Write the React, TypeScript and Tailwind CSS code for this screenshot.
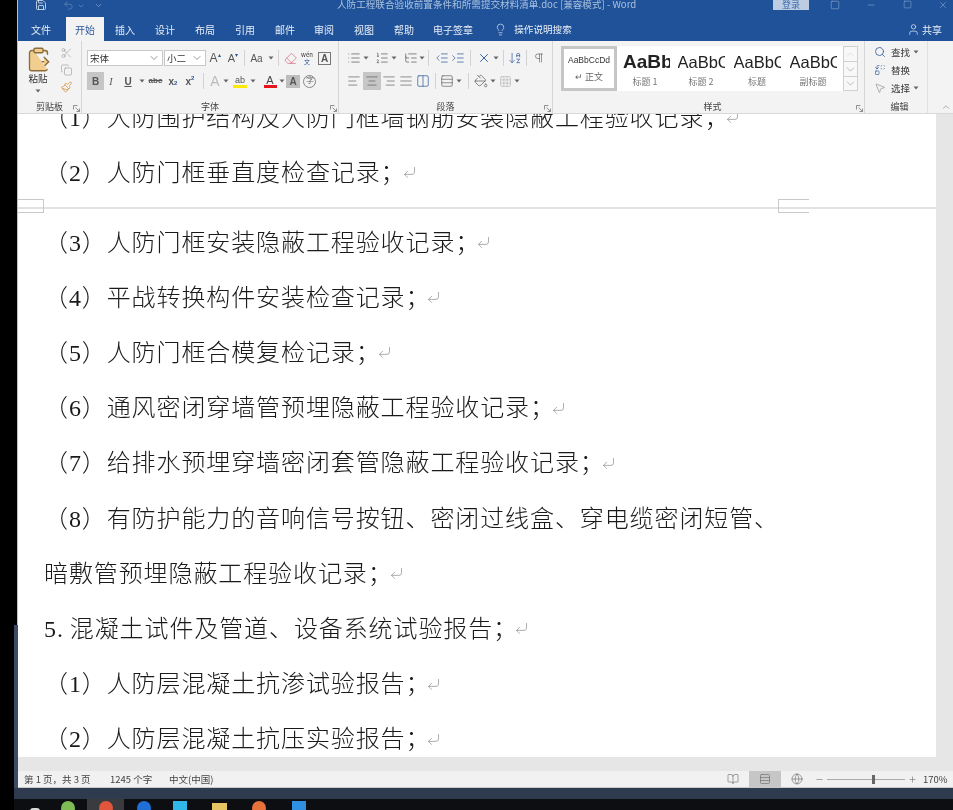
import type { ReactNode } from "react";
import {
  AlignCenter,
  AlignJustify,
  AlignLeft,
  AlignRight,
  ArrowDownAZ,
  BookOpen,
  ChevronDown,
  ChevronUp,
  ClipboardPaste,
  Columns2,
  Copy,
  CornerDownLeft,
  Eraser,
  Globe,
  Grid3x3,
  IndentDecrease,
  IndentIncrease,
  Lightbulb,
  List,
  ListOrdered,
  ListTree,
  Minus,
  MousePointer2,
  PaintBucket,
  Paintbrush,
  Pilcrow,
  Plus,
  Replace,
  Rows3,
  Save,
  Scissors,
  Search,
  Square,
  Undo2,
  User,
  X,
} from "lucide-react";

const page1 = ["（1）人防围护结构及人防门框墙钢筋安装隐蔽工程验收记录；", "（2）人防门框垂直度检查记录；"];
const page2 = [
  "（3）人防门框安装隐蔽工程验收记录；",
  "（4）平战转换构件安装检查记录；",
  "（5）人防门框合模复检记录；",
  "（6）通风密闭穿墙管预埋隐蔽工程验收记录；",
  "（7）给排水预埋穿墙密闭套管隐蔽工程验收记录；",
];

function Caret() {
  return (
    <svg width="6" height="4" viewBox="0 0 6 4" className="mx-auto">
      <path d="M0.5 0.5h5L3 3.5z" fill="#666" />
    </svg>
  );
}

function CaretSlot({ className = "w-[8px]" }: { className?: string }) {
  return (
    <div className={`${className} flex shrink-0 items-center justify-center`}>
      <Caret />
    </div>
  );
}

function Slot({ className, children }: { className: string; children: ReactNode }) {
  return <div className={`${className} flex h-full shrink-0 items-center justify-center text-[#555]`}>{children}</div>;
}

function Sep({ className }: { className: string }) {
  return <div className={`${className} h-[16px] w-px shrink-0 self-center bg-[#d2d2d2]`} />;
}

function Launcher() {
  return (
    <svg width="7" height="7" viewBox="0 0 7 7" className="absolute right-[1px] bottom-[1px]">
      <path d="M0.5 0.5h4M0.5 0.5v4M2.5 2.5l4 4M6.5 3.5v3h-3" fill="none" stroke="#777" strokeWidth="0.8" />
    </svg>
  );
}

function GroupLabel({ children, launcher = true }: { children: ReactNode; launcher?: boolean }) {
  return (
    <div className="relative mt-auto flex h-[13px] items-center justify-center text-[9px] leading-none text-[#444]">
      {children}
      {launcher && <Launcher />}
    </div>
  );
}

function Ret() {
  return <CornerDownLeft size={15} strokeWidth={1.3} className="ml-[-4px] inline-block shrink-0 text-[#9a9a9a]" />;
}

function DocLine({ text, mark = true }: { text: ReactNode; mark?: boolean }) {
  return (
    <div className="flex h-[55.2px] items-center whitespace-nowrap pl-[26px] text-[24px] font-light tracking-[0.9px] text-[#1a1a1a]">
      <span>{text}</span>
      {mark && <Ret />}
    </div>
  );
}

function StyleItem({ sample, name, className }: { sample: string; name: string; className: string }) {
  return (
    <div className="flex h-full w-[56px] shrink-0 flex-col items-center overflow-hidden">
      <div className={`${className} mt-[5px] flex h-[23px] w-[47px] items-center overflow-hidden font-['Liberation_Sans',sans-serif] whitespace-nowrap text-[#222]`}>
        {sample}
      </div>
      <div className="mt-[3px] text-[9px] leading-none text-[#777]">{name}</div>
    </div>
  );
}

function EditRow({ icon, label, caret }: { icon: ReactNode; label: string; caret?: boolean }) {
  return (
    <div className="flex h-[18px] items-center text-[9.5px] text-[#333]">
      <div className="flex w-[16px] items-center justify-center">{icon}</div>
      <span className="ml-[3px]">{label}</span>
      {caret && <div className="ml-[3px]"><Caret /></div>}
    </div>
  );
}

function Ribbon() {
  return (
    <div className="flex h-[73px] shrink-0 border-b border-[#d8d8d8] bg-[#f3f3f3]">
      {/* 剪贴板 */}
      <div className="flex w-[64px] shrink-0 flex-col border-r border-[#d6d6d6]">
        <div className="flex h-[52px] pt-[5px]">
          <div className="flex w-[40px] flex-col items-center">
            <ClipboardPaste size={27} strokeWidth={1.2} className="fill-[#f1cd8f] text-[#8a6d3b]" />
            <div className="mt-[1px] text-[9.5px] leading-none text-[#333]">粘贴</div>
            <div className="mt-[5px]"><Caret /></div>
          </div>
          <div className="flex w-[16px] flex-col items-center gap-[5px] pt-[1px] text-[#999]">
            <Scissors size={13} strokeWidth={1.2} />
            <Copy size={13} strokeWidth={1.2} />
            <Paintbrush size={13} strokeWidth={1.4} className="text-[#c98b2e]" />
          </div>
        </div>
        <GroupLabel>剪贴板</GroupLabel>
      </div>

      {/* 字体 */}
      <div className="flex w-[257px] shrink-0 flex-col border-r border-[#d6d6d6]">
        <div className="mt-[9px] flex h-[16px] items-center pl-[5px] text-[#555]">
          <div className="flex h-full w-[76px] shrink-0 items-center justify-between border border-[#c8c8c8] bg-white px-[2px] text-[9.5px] text-[#333]">
            宋体
            <ChevronDown size={12} strokeWidth={1} />
          </div>
          <div className="ml-px flex h-full w-[42px] shrink-0 items-center justify-between border border-[#c8c8c8] bg-white px-[2px] text-[9.5px] text-[#333]">
            小二
            <ChevronDown size={12} strokeWidth={1} />
          </div>
          <Slot className="w-[18px] font-['Liberation_Sans',sans-serif] text-[12px]">A<span className="mb-[6px] text-[6px] text-[#2b579a]">▴</span></Slot>
          <Slot className="w-[18px] font-['Liberation_Sans',sans-serif] text-[11px]">A<span className="mb-[6px] text-[6px] text-[#2b579a]">▾</span></Slot>
          <Sep className="ml-[2px]" />
          <Slot className="ml-[1px] w-[21px] font-['Liberation_Sans',sans-serif] text-[10px]">Aa</Slot>
          <CaretSlot className="w-[7px]" />
          <Sep className="ml-[4px]" />
          <Slot className="ml-[2px] w-[18px]"><Eraser size={13} strokeWidth={1.3} className="text-[#d1657c]" /></Slot>
          <Slot className="w-[16px] flex-col text-[6px] leading-[7px]"><span className="text-[#333]">wén</span><span className="text-[#2b579a]">文</span></Slot>
          <div className="ml-[3px] flex h-[13px] w-[13px] shrink-0 items-center justify-center border border-[#777] font-['Liberation_Sans',sans-serif] text-[10px] font-bold text-[#555]">A</div>
        </div>
        <div className="mt-[6px] flex h-[18px] items-center pl-[5px] font-['Liberation_Sans',sans-serif] text-[10px] text-[#555]">
          <Slot className="w-[17px] bg-[#c6c6c6] font-bold">B</Slot>
          <Slot className="w-[14px] font-['Liberation_Serif',serif] italic">I</Slot>
          <Slot className="w-[20px] font-bold underline">U</Slot>
          <CaretSlot />
          <Slot className="w-[19px] text-[8px] font-bold line-through">abc</Slot>
          <Slot className="w-[16px] font-bold">x<sub className="text-[6px] text-[#2b579a]">2</sub></Slot>
          <Slot className="w-[18px] font-bold">x<sup className="text-[6px] text-[#2b579a]">2</sup></Slot>
          <Sep className="ml-[4px]" />
          <Slot className="ml-[4px] w-[14px] text-[14px] text-[#bbb]">A</Slot>
          <CaretSlot />
          <Slot className="ml-px w-[18px]">
            <div className="flex flex-col items-center">
              <span className="text-[9px] leading-[10px] text-[#555]">ab</span>
              <span className="h-[3px] w-[14px] bg-[#ffea00]" />
            </div>
          </Slot>
          <CaretSlot />
          <Slot className="ml-[5px] w-[16px]">
            <div className="flex flex-col items-center">
              <span className="text-[11px] leading-[10px] text-[#444]">A</span>
              <span className="h-[3px] w-[13px] bg-[#e8141c]" />
            </div>
          </Slot>
          <CaretSlot className="w-[7px]" />
          <div className="ml-px flex h-[13px] w-[14px] shrink-0 items-center justify-center bg-[#bdbdbd] text-[10px] font-bold text-[#555]">A</div>
          <div className="ml-[3px] flex h-[13px] w-[13px] shrink-0 items-center justify-center rounded-full border border-[#888] text-[8px] text-[#666]">字</div>
        </div>
        <GroupLabel>字体</GroupLabel>
      </div>

      {/* 段落 */}
      <div className="flex w-[214px] shrink-0 flex-col border-r border-[#d6d6d6]">
        <div className="mt-[9px] flex h-[16px] items-center pl-[7px]">
          <Slot className="w-[16px]"><List size={14} strokeWidth={1.2} /></Slot>
          <CaretSlot />
          <Slot className="ml-[4px] w-[16px]"><ListOrdered size={14} strokeWidth={1.2} /></Slot>
          <CaretSlot />
          <Slot className="ml-[5px] w-[16px]"><ListTree size={14} strokeWidth={1.2} /></Slot>
          <CaretSlot className="w-[6px]" />
          <Sep className="ml-[3px]" />
          <Slot className="ml-[5px] w-[16px]"><IndentDecrease size={14} strokeWidth={1.2} className="text-[#2b579a]" /></Slot>
          <Slot className="w-[16px]"><IndentIncrease size={14} strokeWidth={1.2} className="text-[#2b579a]" /></Slot>
          <Sep className="ml-[4px]" />
          <Slot className="ml-[5px] w-[16px]"><X size={14} strokeWidth={1.6} className="text-[#2b579a]" /></Slot>
          <CaretSlot />
          <Sep className="ml-[3px]" />
          <Slot className="ml-[3px] w-[16px]"><ArrowDownAZ size={14} strokeWidth={1.2} className="text-[#2b579a]" /></Slot>
          <Sep className="ml-[3px]" />
          <Slot className="ml-[4px] w-[16px]"><Pilcrow size={12} strokeWidth={1.2} /></Slot>
        </div>
        <div className="mt-[6px] flex h-[18px] items-center pl-[7px]">
          <Slot className="w-[16px]"><AlignLeft size={14} strokeWidth={1.1} /></Slot>
          <Slot className="ml-px w-[18px] bg-[#c6c6c6]"><AlignCenter size={14} strokeWidth={1.1} /></Slot>
          <Slot className="w-[16px]"><AlignRight size={14} strokeWidth={1.1} /></Slot>
          <Slot className="ml-px w-[16px]"><AlignJustify size={14} strokeWidth={1.1} /></Slot>
          <Slot className="ml-px w-[16px]"><Columns2 size={14} strokeWidth={1.2} className="text-[#2b579a]" /></Slot>
          <Sep className="ml-[4px]" />
          <Slot className="ml-[3px] w-[16px]"><Rows3 size={14} strokeWidth={1.1} /></Slot>
          <CaretSlot />
          <Sep className="ml-[5px]" />
          <Slot className="ml-[4px] w-[16px]"><PaintBucket size={14} strokeWidth={1.2} /></Slot>
          <CaretSlot />
          <Slot className="w-[16px] text-[#aaa]"><Grid3x3 size={13} strokeWidth={1} /></Slot>
          <CaretSlot />
        </div>
        <GroupLabel>段落</GroupLabel>
      </div>

      {/* 样式 */}
      <div className="flex w-[312px] shrink-0 flex-col border-r border-[#d6d6d6] pl-[8px]">
        <div className="mt-[5px] flex h-[45px] w-[297px]">
          <div className="flex h-full w-[282px] bg-white">
            <div className="flex h-full w-[56px] shrink-0 flex-col items-center border-[3px] border-[#c6c6c6]">
              <div className="mt-[5px] font-['Liberation_Sans',sans-serif] text-[8.5px] leading-[12px] text-[#333]">AaBbCcDd</div>
              <div className="mt-[6px] text-[9px] leading-none text-[#666]">↵ 正文</div>
            </div>
            <StyleItem sample="AaBbC" name="标题 1" className="ml-[3px] text-[19px] font-bold" />
            <StyleItem sample="AaBbC" name="标题 2" className="text-[16.5px]" />
            <StyleItem sample="AaBbC" name="标题" className="text-[16.5px]" />
            <StyleItem sample="AaBbC" name="副标题" className="text-[16.5px]" />
          </div>
          <div className="flex w-[15px] flex-col border border-[#d0d0d0] bg-[#f8f8f8] text-[#888]">
            <div className="flex h-[15px] items-center justify-center border-b border-[#d0d0d0] text-[#ccc]"><ChevronUp size={13} strokeWidth={1} /></div>
            <div className="flex h-[15px] items-center justify-center border-b border-[#d0d0d0]"><ChevronDown size={13} strokeWidth={1} /></div>
            <div className="flex flex-1 items-center justify-center"><ChevronDown size={13} strokeWidth={1} /></div>
          </div>
        </div>
        <GroupLabel>样式</GroupLabel>
      </div>

      {/* 编辑 */}
      <div className="flex w-[63px] shrink-0 flex-col border-r border-[#e0e0e0] pl-[7px]">
        <div className="mt-[2px]">
          <EditRow icon={<Search size={12} strokeWidth={1.6} className="text-[#2b579a]" />} label="查找" caret />
          <EditRow icon={<Replace size={12} strokeWidth={1.3} className="text-[#2b579a]" />} label="替换" />
          <EditRow icon={<MousePointer2 size={12} strokeWidth={1.1} className="text-[#777]" />} label="选择" caret />
        </div>
        <GroupLabel launcher={false}>编辑</GroupLabel>
      </div>
      <div className="flex flex-1 items-end justify-end pr-[2px] pb-[1px] text-[#666]">
        <ChevronUp size={10} strokeWidth={1.2} />
      </div>
    </div>
  );
}

function Tab({ className, children }: { className: string; children: ReactNode }) {
  return <div className={`${className} flex h-full shrink-0 items-center justify-center whitespace-nowrap text-[#e6edf6]`}>{children}</div>;
}

function Header() {
  return (
    <div className="shrink-0 bg-[#20529a] text-[10px]">
      <div className="flex h-[17px] items-start overflow-hidden">
        <div className="flex w-[319px] shrink-0 items-center pl-[17px] text-[#dfe8f3]">
          <Save size={12} strokeWidth={1.6} className="-mt-[1px]" />
          <Undo2 size={11} strokeWidth={1.4} className="ml-[16px] text-[#6f8fbd]" />
          <ChevronDown size={8} className="ml-[3px] text-[#6f8fbd]" />
          <ChevronDown size={9} className="ml-[9px] text-[#8ea8cc]" />
        </div>
        <div className="-mt-[2px] w-[303px] shrink-0 whitespace-nowrap text-[9.6px] leading-[12px] text-[#a9c1de]">
          人防工程联合验收前置条件和所需提交材料清单.doc [兼容模式] - Word
        </div>
        <div className="ml-[133px] flex h-[10px] w-[36px] shrink-0 items-center justify-center bg-[#bccde3] text-[9px] text-[#3c6aa8]">登录</div>
        <div className="flex flex-1 items-start text-[#bcd0e6]">
          <div className="flex w-[52px] justify-center"><Square size={10} strokeWidth={1} /></div>
          <div className="flex w-[20px] justify-center"><Minus size={10} strokeWidth={1} /></div>
          <div className="flex w-[52px] justify-center"><Square size={9} strokeWidth={1} /></div>
          <div className="flex w-[20px] justify-center"><X size={10} strokeWidth={1} /></div>
        </div>
      </div>
      <div className="flex h-[24px] items-center">
        <Tab className="ml-[3px] w-[40px]">文件</Tab>
        <Tab className="ml-[5px] w-[38px] bg-[#f3f3f3] text-[#2b579a]!">开始</Tab>
        <Tab className="ml-px w-[40px]">插入</Tab>
        <Tab className="w-[40px]">设计</Tab>
        <Tab className="w-[40px]">布局</Tab>
        <Tab className="w-[40px]">引用</Tab>
        <Tab className="w-[40px]">邮件</Tab>
        <Tab className="w-[38px]">审阅</Tab>
        <Tab className="ml-px w-[40px]">视图</Tab>
        <Tab className="w-[40px]">帮助</Tab>
        <Tab className="w-[58px]">电子签章</Tab>
        <Tab className="ml-[8px] w-[20px]"><Lightbulb size={13} strokeWidth={1.2} /></Tab>
        <Tab className="ml-[4px] w-[58px] text-[9.6px]">操作说明搜索</Tab>
        <div className="ml-auto flex items-center pr-[11px] text-[#e6edf6]">
          <User size={13} strokeWidth={1.3} />
          <span className="ml-[2px]">共享</span>
        </div>
      </div>
    </div>
  );
}

function Document() {
  return (
    <div className="flex min-h-0 flex-1 bg-[#e6e6e6]">
      <div className="relative w-[918px] shrink-0 overflow-hidden bg-white font-['Liberation_Serif','Noto_Sans_CJK_SC',serif]">
        <div className="h-[93px] overflow-hidden">
          <div className="-mt-[24px]">
            {page1.map((t) => (
              <DocLine key={t} text={t} />
            ))}
          </div>
        </div>
        <div className="h-[2px] bg-[#e2e2e2]" />
        <div className="pt-[6px]">
          {page2.map((t) => (
            <DocLine key={t} text={t} />
          ))}
          <DocLine text="（8）有防护能力的音响信号按钮、密闭过线盒、穿电缆密闭短管、" mark={false} />
          <DocLine text="暗敷管预埋隐蔽工程验收记录；" />
          <DocLine text={<>5.<span className="ml-[6px]">混凝土试件及管道、设备系统试验报告；</span></>} />
          <DocLine text="（1）人防层混凝土抗渗试验报告；" />
          <DocLine text="（2）人防层混凝土抗压实验报告；" />
        </div>
        {/* page corner marks */}
        <div className="absolute top-[85px] left-0 h-[14px] w-[26px] border-y border-r border-[#c9c9c9]" />
        <div className="absolute top-[85px] left-[760px] h-[14px] w-[31px] border-y border-l border-[#c9c9c9]" />
      </div>
    </div>
  );
}

function StatusBar() {
  return (
    <div className="flex h-[17px] shrink-0 items-center border-b border-[#c8c8c8] bg-[#f1f1f1] pl-[6px] text-[9.5px] text-[#444]">
      <span className="w-[86px]">第 1 页，共 3 页</span>
      <span className="w-[59px]">1245 个字</span>
      <span>中文(中国)</span>
      <div className="ml-auto flex h-full items-center text-[#666]">
        <BookOpen size={12} strokeWidth={1.2} />
        <div className="ml-[10px] flex h-full w-[32px] items-center justify-center bg-[#c6c6c6]">
          <Rows3 size={12} strokeWidth={1.2} />
        </div>
        <Globe size={12} strokeWidth={1.2} className="ml-[10px]" />
        <Minus size={9} strokeWidth={1.5} className="ml-[12px]" />
        <div className="relative ml-[3px] flex h-full w-[78px] items-center">
          <div className="h-px w-full bg-[#aaa]" />
          <div className="absolute left-[45px] h-[9px] w-[3px] bg-[#666]" />
        </div>
        <Plus size={9} strokeWidth={1.5} className="ml-[3px]" />
        <span className="ml-[6px] w-[30px] text-[#444]">170%</span>
      </div>
    </div>
  );
}

function Taskbar() {
  return (
    <div className="ml-[14px] flex h-[11px] overflow-hidden bg-[#0d0e12]">
      <div className="ml-[16px] mt-[9px] h-[6px] w-[10px] rounded-full bg-[#d8d8d8]" />
      <div className="ml-[21px] mt-[2px] h-[14px] w-[14px] rounded-full bg-[#7dbb55]" />
      <div className="ml-[12px] flex w-[37px] justify-center bg-[#3a3b3f]">
        <div className="mt-[2px] h-[14px] w-[14px] rounded-full bg-[#e2553d]" />
      </div>
      <div className="ml-[13px] mt-[2px] h-[14px] w-[14px] rounded-full bg-[#1f6fd6]" />
      <div className="ml-[22px] mt-[2px] h-[14px] w-[14px] bg-[#2fb7e8]" />
      <div className="ml-[25px] mt-[4px] h-[14px] w-[15px] bg-[#e6c463]" />
      <div className="ml-[25px] mt-[2px] h-[14px] w-[14px] rounded-full bg-[#e8703a]" />
      <div className="ml-[26px] mt-[2px] h-[14px] w-[14px] bg-[#2f8fe0]" />
    </div>
  );
}

export default function App() {
  return (
    <div lang="zh-CN" className="flex h-[810px] w-[953px] flex-col overflow-hidden bg-black font-['Noto_Sans_CJK_SC','Liberation_Sans',sans-serif] blur-[0.4px]">
      <div className="flex h-[788px] shrink-0">
        <div className="flex w-[18px] shrink-0 flex-col">
          <div className="h-[625px] shrink-0 border-r border-[#c0c0c0]" />
          <div className="ml-[14px] flex-1 bg-[#3d4a63]" />
        </div>
        <div className="flex min-w-0 flex-1 flex-col">
          <Header />
          <Ribbon />
          <Document />
          <div className="h-[14px] shrink-0 bg-[#e6e6e6]" />
          <StatusBar />
        </div>
      </div>
      <div className="ml-[14px] h-[11px] shrink-0 bg-[#2e3b4e]" />
      <Taskbar />
    </div>
  );
}
